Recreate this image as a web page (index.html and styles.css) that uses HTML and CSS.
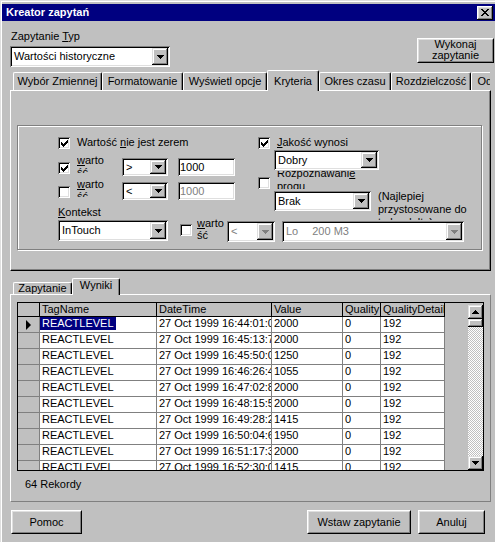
FILE: index.html
```html
<!DOCTYPE html>
<html lang="pl">
<head>
<meta charset="utf-8">
<title>Kreator zapytań</title>
<link rel="stylesheet" href="styles.css">
</head>
<body>
<div class="window">
  <div class="titlebar">
    <span class="title">Kreator zapytań</span>
    <span class="xbtn"><svg width="8" height="7" viewBox="0 0 8 7" shape-rendering="crispEdges"><path d="M0 0h2v1H0zM6 0h2v1H6zM1 1h2v1H1zM5 1h2v1H5zM2 2h4v1H2zM3 3h2v1H3zM2 4h4v1H2zM1 5h2v1H1zM5 5h2v1H5zM0 6h2v1H0zM6 6h2v1H6z" fill="#000"/></svg></span>
  </div>
  <div class="content">
    <div class="top">
      <div class="typ">
        <div class="lbl">Zapytanie <u>T</u>yp</div>
        <div class="combo c-typ"><span class="val">Wartości historyczne</span><span class="drop"><svg width="7" height="4" viewBox="0 0 7 4" shape-rendering="crispEdges"><path d="M0 0h7v1H0zM1 1h5v1H1zM2 2h3v1H2zM3 3h1v1H3z"/></svg></span></div>
      </div>
      <div class="btn btn-wyk"><span class="btn-in"><span class="wyk-txt">Wykonaj<br>zapytanie</span></span></div>
    </div>

    <div class="tabs tabs1">
      <div class="tab t-wybor">Wybór Zmiennej</div>
      <div class="tab t-format">Formatowanie</div>
      <div class="tab t-opcje">Wyświetl opcje</div>
      <div class="tab sel t-kryt">Kryteria</div>
      <div class="tab t-okres">Okres czasu</div>
      <div class="tab t-rozdz">Rozdzielczość</div>
      <div class="tab t-od">Odświeżanie</div>
    </div>
    <div class="panel panel1">
      <div class="group">
        <div class="crit-upper">
          <div class="colL">
            <div class="chkrow"><span class="cb on"><svg width="7" height="7" viewBox="0 0 7 7" shape-rendering="crispEdges"><path d="M6 0h1v1H6zM5 1h2v1H5zM0 2h1v1H0zM4 2h3v1H4zM0 3h2v1H0zM3 3h3v1H3zM0 4h5v1H0zM1 5h3v1H1zM2 6h1v1H2z"/></svg></span><span class="txt">Wartość <u>n</u>ie jest zerem</span></div>
            <div class="r-warto">
              <span class="cb on"><svg width="7" height="7" viewBox="0 0 7 7" shape-rendering="crispEdges"><path d="M6 0h1v1H6zM5 1h2v1H5zM0 2h1v1H0zM4 2h3v1H4zM0 3h2v1H0zM3 3h3v1H3zM0 4h5v1H0zM1 5h3v1H1zM2 6h1v1H2z"/></svg></span>
              <span class="wlbl"><u>w</u>arto<br>ść</span>
              <div class="combo c-op"><span class="val">&gt;</span><span class="drop"><svg width="7" height="4" viewBox="0 0 7 4" shape-rendering="crispEdges"><path d="M0 0h7v1H0zM1 1h5v1H1zM2 2h3v1H2zM3 3h1v1H3z"/></svg></span></div>
              <div class="field">1000</div>
            </div>
            <div class="r-warto">
              <span class="cb"></span>
              <span class="wlbl"><u>w</u>arto<br>ść</span>
              <div class="combo c-op"><span class="val">&lt;</span><span class="drop"><svg width="7" height="4" viewBox="0 0 7 4" shape-rendering="crispEdges"><path d="M0 0h7v1H0zM1 1h5v1H1zM2 2h3v1H2zM3 3h1v1H3z"/></svg></span></div>
              <div class="field dis">1000</div>
            </div>
            <div class="kontekst"><u>K</u>ontekst</div>
          </div>
          <div class="colR">
            <div class="chkrow"><span class="cb on"><svg width="7" height="7" viewBox="0 0 7 7" shape-rendering="crispEdges"><path d="M6 0h1v1H6zM5 1h2v1H5zM0 2h1v1H0zM4 2h3v1H4zM0 3h2v1H0zM3 3h3v1H3zM0 4h5v1H0zM1 5h3v1H1zM2 6h1v1H2z"/></svg></span><span class="txt"><u>J</u>akość wynosi</span></div>
            <div class="combo c-dobry"><span class="val">Dobry</span><span class="drop"><svg width="7" height="4" viewBox="0 0 7 4" shape-rendering="crispEdges"><path d="M0 0h7v1H0zM1 1h5v1H1zM2 2h3v1H2zM3 3h1v1H3z"/></svg></span></div>
            <div class="r-roz">
              <span class="cb"></span>
              <span class="rozlbl"><span>Rozpoznawani<u>e</u> progu</span></span>
            </div>
            <div class="r-brak">
              <div class="combo c-brak"><span class="val">Brak</span><span class="drop"><svg width="7" height="4" viewBox="0 0 7 4" shape-rendering="crispEdges"><path d="M0 0h7v1H0zM1 1h5v1H1zM2 2h3v1H2zM3 3h1v1H3z"/></svg></span></div>
              <div class="note">(Najlepiej przystosowane do trybu delta)</div>
            </div>
          </div>
        </div>
        <div class="crit-lower">
          <div class="combo c-ctx"><span class="val">InTouch</span><span class="drop"><svg width="7" height="4" viewBox="0 0 7 4" shape-rendering="crispEdges"><path d="M0 0h7v1H0zM1 1h5v1H1zM2 2h3v1H2zM3 3h1v1H3z"/></svg></span></div>
          <span class="cb cb-low"></span>
          <span class="wlbl wlbl-low"><u>w</u>arto<br>ść</span>
          <div class="combo dis c-dop"><span class="val">&lt;</span><span class="drop"><svg width="7" height="4" viewBox="0 0 7 4" shape-rendering="crispEdges"><path d="M0 0h7v1H0zM1 1h5v1H1zM2 2h3v1H2zM3 3h1v1H3z"/></svg></span></div>
          <div class="combo dis c-lo"><span class="val"><span>Lo</span><span class="lo-val">200 M3</span></span><span class="drop"><svg width="7" height="4" viewBox="0 0 7 4" shape-rendering="crispEdges"><path d="M0 0h7v1H0zM1 1h5v1H1zM2 2h3v1H2zM3 3h1v1H3z"/></svg></span></div>
        </div>
      </div>
    </div>

    <div class="tabs tabs2">
      <div class="tab2 t-zap">Zapytanie</div>
      <div class="tab2 sel t-wyn">Wyniki</div>
    </div>
    <div class="panel panel2">
      <div class="grid">
        <div class="gtable">
          <div class="c h rh"></div><div class="c h">TagName</div><div class="c h">DateTime</div><div class="c h">Value</div><div class="c h">Quality</div><div class="c h">QualityDetail</div>

          <div class="c rh cur"><svg width="5" height="10" viewBox="0 0 5 10"><path d="M0 0L5 5L0 10z"/></svg></div><div class="c nopad"><span class="selcell">REACTLEVEL</span></div><div class="c">27 Oct 1999 16:44:01:0</div><div class="c">2000</div><div class="c">0</div><div class="c">192</div>
          <div class="c rh"></div><div class="c">REACTLEVEL</div><div class="c">27 Oct 1999 16:45:13:7</div><div class="c">2000</div><div class="c">0</div><div class="c">192</div>
          <div class="c rh"></div><div class="c">REACTLEVEL</div><div class="c">27 Oct 1999 16:45:50:0</div><div class="c">1250</div><div class="c">0</div><div class="c">192</div>
          <div class="c rh"></div><div class="c">REACTLEVEL</div><div class="c">27 Oct 1999 16:46:26:4</div><div class="c">1055</div><div class="c">0</div><div class="c">192</div>
          <div class="c rh"></div><div class="c">REACTLEVEL</div><div class="c">27 Oct 1999 16:47:02:8</div><div class="c">2000</div><div class="c">0</div><div class="c">192</div>
          <div class="c rh"></div><div class="c">REACTLEVEL</div><div class="c">27 Oct 1999 16:48:15:5</div><div class="c">2000</div><div class="c">0</div><div class="c">192</div>
          <div class="c rh"></div><div class="c">REACTLEVEL</div><div class="c">27 Oct 1999 16:49:28:2</div><div class="c">1415</div><div class="c">0</div><div class="c">192</div>
          <div class="c rh"></div><div class="c">REACTLEVEL</div><div class="c">27 Oct 1999 16:50:04:6</div><div class="c">1950</div><div class="c">0</div><div class="c">192</div>
          <div class="c rh"></div><div class="c">REACTLEVEL</div><div class="c">27 Oct 1999 16:51:17:3</div><div class="c">2000</div><div class="c">0</div><div class="c">192</div>
          <div class="c rh"></div><div class="c">REACTLEVEL</div><div class="c">27 Oct 1999 16:52:30:0</div><div class="c">1415</div><div class="c">0</div><div class="c">192</div>
        </div>
        <div class="vscroll">
          <div class="sbtn"><svg width="7" height="4" viewBox="0 0 7 4" shape-rendering="crispEdges"><path d="M3 0h1v1H3zM2 1h3v1H2zM1 2h5v1H1zM0 3h7v1H0z"/></svg></div>
          <div class="thumb"></div>
          <div class="track"></div>
          <div class="sbtn"><svg width="7" height="4" viewBox="0 0 7 4" shape-rendering="crispEdges"><path d="M0 0h7v1H0zM1 1h5v1H1zM2 2h3v1H2zM3 3h1v1H3z"/></svg></div>
        </div>
      </div>
      <div class="count">64 Rekordy</div>
    </div>

    <div class="bottom">
      <div class="btn b-pomoc"><span class="btn-in">Pomoc</span></div>
      <div class="spacer"></div>
      <div class="btn b-wstaw"><span class="btn-in">Wstaw zapytanie</span></div>
      <div class="btn b-anuluj"><span class="btn-in">Anuluj</span></div>
    </div>
  </div>
</div>
</body>
</html>
```

FILE: styles.css
```css
* { box-sizing: border-box; }

html, body {
  margin: 0;
  width: 495px;
  height: 542px;
  overflow: hidden;
}

body {
  background: #c0c0c0;
  font-family: "Liberation Sans", Arial, sans-serif;
  font-size: 11px;
  line-height: 13px;
  color: #000;
}

u { text-decoration: underline; text-underline-offset: 1px; }

.window {
  width: 495px;
  height: 542px;
  border-top: 1px solid #dfdfdf;
  border-left: 1px solid #dfdfdf;
  box-shadow: inset 1px 1px #fff;
  padding: 3px 0 0 1px;
  overflow: hidden;
}

/* title bar */
.titlebar {
  height: 17px;
  background: #000080;
  color: #fff;
  font-weight: bold;
  display: flex;
  align-items: center;
  justify-content: space-between;
  padding: 0 2px 0 4px;
}
.xbtn {
  width: 16px;
  height: 14px;
  background: #c0c0c0;
  box-shadow: inset -1px -1px #000, inset 1px 1px #fff, inset -2px -2px #808080, inset 2px 2px #dfdfdf;
  display: flex;
  align-items: center;
  justify-content: center;
}

.content { padding-left: 8px; }

/* top row */
.top {
  display: flex;
  justify-content: space-between;
  align-items: flex-start;
  padding-right: 1px;
}
.typ { padding-top: 9px; }
.lbl { padding-left: 1px; }

/* combo box */
.combo {
  display: flex;
  background: #fff;
  padding: 2px;
  height: 20px;
  flex: none;
  box-shadow: inset 1px 1px #808080, inset -1px -1px #fff, inset 2px 2px #000, inset -2px -2px #dfdfdf;
}
.combo .val {
  flex: 1;
  padding-left: 2px;
  overflow: hidden;
  white-space: nowrap;
  display: flex;
  align-items: center;
}
.drop {
  width: 16px;
  flex: none;
  background: #c0c0c0;
  box-shadow: inset -1px -1px #000, inset 1px 1px #dfdfdf, inset -2px -2px #808080, inset 2px 2px #fff;
  display: flex;
  align-items: center;
  justify-content: center;
}
.drop svg path { fill: #000; }
.combo.dis .val { color: #808080; }
.combo.dis .drop svg path { fill: #808080; }

.c-typ { width: 160px; height: 21px; margin-top: 3px; }

/* buttons */
.btn {
  background: #c0c0c0;
  border: 1px solid;
  border-color: #fff #000 #000 #fff;
  flex: none;
}
.btn-in {
  height: 100%;
  border: 1px solid;
  border-color: #dfdfdf #808080 #808080 #dfdfdf;
  display: flex;
  align-items: center;
  justify-content: center;
  white-space: nowrap;
  overflow: hidden;
}
.btn-wyk { width: 77px; height: 25px; margin-top: 17px; }
.btn-wyk .btn-in { display: block; text-align: center; line-height: 11px; }
.wyk-txt { display: block; margin-top: -1px; }

/* tabs */
.tabs {
  display: flex;
  align-items: flex-start;
  overflow: hidden;
  position: relative;
  z-index: 1;
  padding-left: 3px;
  width: 480px;
}
.tabs1 { height: 21px; margin-top: 3px; }
.tab {
  flex: none;
  margin-top: 2px;
  height: 18px;
  padding-top: 2px;
  background: #c0c0c0;
  border-top: 1px solid #fff;
  border-left: 1px solid #fff;
  border-right: 1px solid #000;
  border-radius: 2px 2px 0 0;
  box-shadow: inset -1px 0 #808080;
  text-align: center;
  white-space: nowrap;
  overflow: hidden;
}
.tab.sel { margin-top: 0; height: 21px; padding-top: 4px; }
.t-wybor { width: 89px; }
.t-format { width: 81px; }
.t-opcje { width: 84px; }
.t-kryt { width: 52px; }
.t-okres { width: 72px; }
.t-rozdz { width: 80px; }
.t-od { width: 76px; }

.panel {
  width: 481px;
  margin-top: -1px;
  border-top: 1px solid #fff;
  border-left: 1px solid #fff;
  border-right: 1px solid #000;
  border-bottom: 1px solid #000;
  box-shadow: inset -1px -1px #808080;
}
.panel1 { height: 181px; padding: 34px 0 0 6px; }

/* criteria group */
.group {
  width: 465px;
  height: 125px;
  border: 1px solid #808080;
  box-shadow: inset 1px 1px #fff, 1px 1px #fff;
  padding: 10px 0 0 40px;
}
.crit-upper {
  display: flex;
  height: 84px;
  overflow: hidden;
}
.colL { width: 200px; flex: none; }
.colR { flex: 1; }

.cb {
  display: block;
  width: 12px;
  height: 12px;
  flex: none;
  background: #fff;
  box-shadow: inset 1px 1px #808080, inset -1px -1px #fff, inset 2px 2px #000, inset -2px -2px #dfdfdf;
  padding: 3px 0 0 3px;
}
.cb svg { display: block; }
.cb svg path { fill: #000; }

.chkrow {
  display: flex;
  align-items: center;
  height: 13px;
}
.chkrow .txt { margin-left: 7px; white-space: nowrap; }

.r-warto {
  display: flex;
  align-items: flex-start;
  height: 19px;
  margin-top: 5px;
}
.r-warto .cb { margin-top: 8px; }
.wlbl {
  display: block;
  width: 30px;
  height: 19px;
  margin-left: 7px;
  line-height: 12px;
  overflow: hidden;
  flex: none;
}
.c-op { width: 46px; height: 18px; margin: 4px 0 0 15px; }
.field {
  width: 57px;
  height: 18px;
  margin: 4px 0 0 10px;
  background: #fff;
  padding: 2px 0 0 2px;
  line-height: 14px;
  flex: none;
  box-shadow: inset 1px 1px #808080, inset -1px -1px #fff, inset 2px 2px #000, inset -2px -2px #dfdfdf;
}
.field.dis { color: #808080; }
.kontekst { margin-top: 9px; }

.c-dobry { width: 105px; height: 20px; margin: 1px 0 0 16px; }
.r-roz {
  display: flex;
  align-items: flex-start;
  height: 18px;
  margin-top: 1px;
}
.r-roz .cb { margin-top: 6px; }
.rozlbl {
  width: 85px;
  height: 18px;
  margin-left: 7px;
  overflow: hidden;
  display: flex;
  align-items: center;
}
.r-brak { display: flex; align-items: flex-start; }
.c-brak { width: 97px; height: 20px; margin: 2px 0 0 16px; }
.note { width: 92px; margin: 1px 0 0 7px; }

.crit-lower {
  display: flex;
  align-items: flex-start;
  height: 21px;
}
.c-ctx { width: 110px; height: 21px; }
.cb-low { margin: 4px 0 0 12px; }
.wlbl-low { height: 22px; margin: -3px 0 0 5px; }
.c-dop { width: 48px; height: 21px; margin-top: 1px; }
.c-lo { width: 182px; height: 21px; margin: 1px 0 0 7px; }
.lo-val { margin-left: 14px; }

/* lower tabs */
.tabs2 { height: 17px; margin-top: 7px; }
.tab2 {
  flex: none;
  background: #c0c0c0;
  border-top: 1px solid #fff;
  border-left: 1px solid #fff;
  border-right: 1px solid #000;
  border-radius: 2px 2px 0 0;
  box-shadow: inset -1px 0 #808080;
  text-align: center;
  white-space: nowrap;
  overflow: hidden;
  line-height: 11px;
  margin-top: 4px;
  height: 12px;
}
.tab2.sel { margin-top: 0; height: 17px; padding-top: 1px; }
.t-zap { width: 59px; }
.t-wyn { width: 48px; }

.panel2 {
  height: 208px;
  padding: 7px 0 0 6px;
  border-right-color: #808080;
  border-bottom-color: #808080;
  box-shadow: none;
}

/* data grid */
.grid {
  width: 467px;
  height: 169px;
  border: 1px solid #000;
  background: #c0c0c0;
  display: flex;
  overflow: hidden;
}
.gtable {
  flex: 1;
  display: grid;
  grid-template-columns: 22px 117px 115px 71px 38px 64px;
  grid-template-rows: 14px;
  grid-auto-rows: 16px;
  align-content: start;
  overflow: hidden;
}
.c {
  background: #fff;
  border-right: 1px solid #808080;
  border-bottom: 1px solid #808080;
  padding-left: 2px;
  line-height: 13px;
  white-space: nowrap;
  overflow: hidden;
}
.c.h {
  background: #c0c0c0;
  border-right-color: #000;
  border-bottom-color: #000;
}
.c.rh { background: #c0c0c0; padding: 0; }
.c.cur { display: flex; align-items: center; justify-content: center; }
.c.cur svg path { fill: #000; }
.c.nopad { padding-left: 0; }
.selcell {
  display: inline-block;
  background: #000080;
  color: #fff;
  padding: 0 2px;
  height: 13px;
}

.vscroll {
  width: 15px;
  height: 165px;
  margin: 2px 0 0 1px;
  display: flex;
  flex-direction: column;
  flex: none;
}
.sbtn {
  height: 14px;
  flex: none;
  background: #c0c0c0;
  box-shadow: inset -1px -1px #000, inset 1px 1px #dfdfdf, inset -2px -2px #808080, inset 2px 2px #fff;
  display: flex;
  align-items: center;
  justify-content: center;
}
.sbtn svg path { fill: #000; }
.thumb {
  height: 8px;
  flex: none;
  background: #c0c0c0;
  box-shadow: inset -1px -1px #000, inset 1px 1px #dfdfdf, inset -2px -2px #808080, inset 2px 2px #fff;
}
.track {
  flex: 1;
  background: repeating-conic-gradient(#c0c0c0 0% 25%, #fff 0% 50%) 0 0 / 2px 2px;
}

.count { margin: 7px 0 0 8px; }

/* bottom buttons */
.bottom {
  display: flex;
  margin-top: 8px;
  padding-right: 10px;
}
.bottom .btn { height: 24px; }
.b-pomoc { width: 71px; margin-left: 1px; }
.spacer { flex: 1; }
.b-wstaw { width: 104px; }
.b-anuluj { width: 67px; margin-left: 7px; }
```
